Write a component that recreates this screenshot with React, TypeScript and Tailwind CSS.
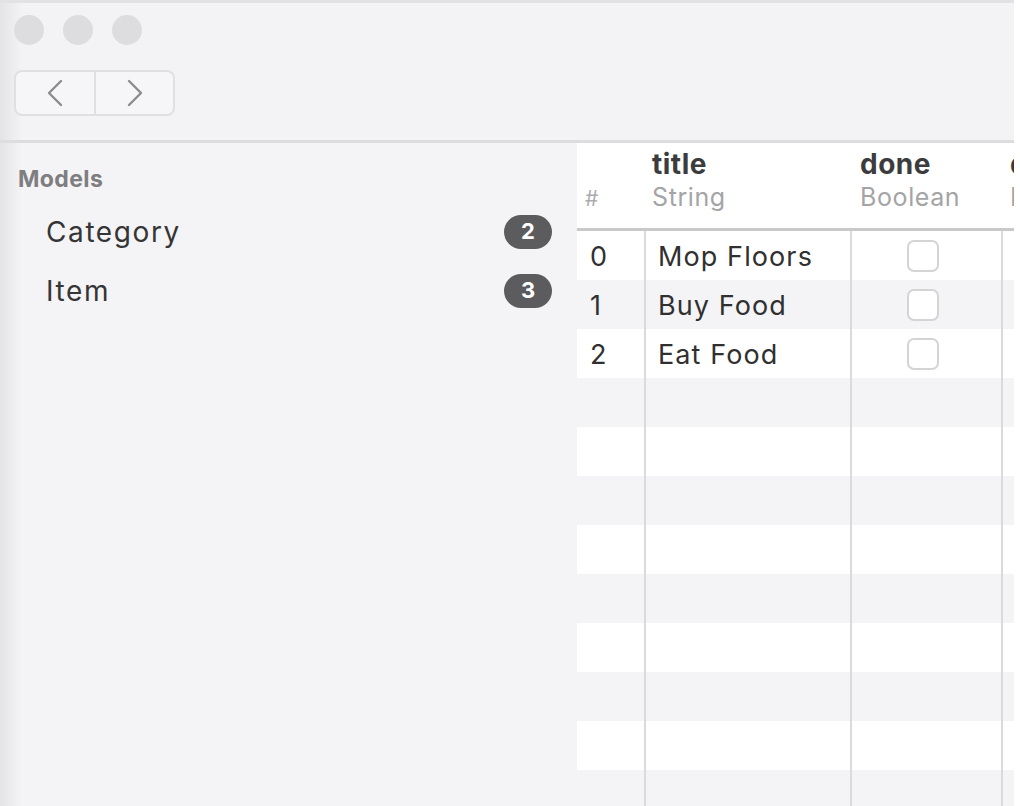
type Row = { id: number; title: string; done: boolean };

const rows: Row[] = [
  { id: 0, title: "Mop Floors", done: false },
  { id: 1, title: "Buy Food", done: false },
  { id: 2, title: "Eat Food", done: false },
];

const models = [
  { name: "Category", count: 2 },
  { name: "Item", count: 3 },
];

const font = { fontFamily: "Inter, 'Liberation Sans', sans-serif" };

function Checkbox() {
  return <div className="w-[32px] h-[32px] rounded-[7px] border-2 border-[#d4d4d6] bg-white" />;
}

function Chevron({ dir }: { dir: "left" | "right" }) {
  return (
    <svg width="18" height="30" viewBox="0 0 18 30" fill="none" stroke="#8c8c8e" strokeWidth="2.4" strokeLinecap="round" strokeLinejoin="round">
      {dir === "left" ? <polyline points="15,3 3,15 15,27" /> : <polyline points="3,3 15,15 3,27" />}
    </svg>
  );
}

export default function App() {
  // 12 rows fill the visible height; only the first three hold data
  const filler = Array.from({ length: 12 }, (_, i) => i);

  return (
    <div className="w-[1020px] h-[806px] bg-white overflow-hidden flex" style={font}>
      <div className="w-[1014px] flex flex-col">
        {/* toolbar */}
        <div className="h-[140px] shrink-0 border-t-[3px] border-[#e2e2e4] bg-[linear-gradient(to_right,#e4e3e6,#f3f2f5_22px)] px-[14px] pt-[12px]">
          <div className="flex gap-[19px]">
            <div className="w-[30px] h-[30px] rounded-full bg-[#dddcdf]" />
            <div className="w-[30px] h-[30px] rounded-full bg-[#dddcdf]" />
            <div className="w-[30px] h-[30px] rounded-full bg-[#dddcdf]" />
          </div>
          <div className="mt-[25px] flex w-[161px] h-[46px] rounded-[8px] border-2 border-[#e0dfe2] bg-[#f6f5f8]">
            <div className="w-[80px] flex items-center justify-center border-r-2 border-[#e0dfe2]">
              <Chevron dir="left" />
            </div>
            <div className="flex-1 flex items-center justify-center">
              <Chevron dir="right" />
            </div>
          </div>
        </div>
        <div className="h-[3px] shrink-0 bg-[#dddcdf]" />

        <div className="flex flex-1 min-h-0">
          {/* sidebar */}
          <div className="w-[577px] shrink-0 bg-[linear-gradient(to_right,#e4e3e6,#f4f3f6_22px)] pt-[22px]">
            <div className="pl-[18px] text-[23px] font-bold text-[#7e7e80] leading-[28px] tracking-[0.4px]">Models</div>
            <div className="mt-[9px]">
              {models.map((m) => (
                <div key={m.name} className="h-[59px] flex items-center pl-[46px] pr-[25px]">
                  <span className="flex-1 text-[28px] text-[#353535] tracking-[1.6px]">{m.name}</span>
                  <span className="w-[48px] h-[34px] rounded-full bg-[#5c5c5e] text-white text-[22px] font-bold flex items-center justify-center">
                    {m.count}
                  </span>
                </div>
              ))}
            </div>
          </div>

          {/* table */}
          <div className="flex-1 min-w-0 flex flex-col overflow-hidden">
            <div className="h-[88px] shrink-0 flex bg-white border-b-[3px] border-[#c9c9cb]">
              <div className="w-[70px] shrink-0 pl-[8px] pt-[40px] text-[21px] text-[#ababad]">#</div>
              <div className="w-[206px] shrink-0 pl-[5px] pt-[4px]">
                <div className="text-[28px] font-bold text-[#3c3c3e] leading-[34px] tracking-[0.5px]">title</div>
                <div className="text-[25px] text-[#a4a4a6] leading-[32px] tracking-[0.6px]">String</div>
              </div>
              <div className="w-[151px] shrink-0 pl-[7px] pt-[4px]">
                <div className="text-[28px] font-bold text-[#3c3c3e] leading-[34px] tracking-[0.5px]">done</div>
                <div className="text-[25px] text-[#a4a4a6] leading-[32px] tracking-[0.6px]">Boolean</div>
              </div>
              <div className="flex-1 pl-[6px] pt-[4px] overflow-hidden whitespace-nowrap">
                <div className="text-[28px] font-bold text-[#3c3c3e] leading-[34px]">d</div>
                <div className="text-[25px] text-[#a4a4a6] leading-[32px]">D</div>
              </div>
            </div>
            {filler.map((i) => {
              const r = rows[i];
              return (
                <div key={i} className={`h-[49px] shrink-0 flex ${i % 2 === 1 ? "bg-[#f4f3f6]" : "bg-white"}`}>
                  <div className="w-[69px] shrink-0 pl-[13px] pt-[4px] flex items-center text-[27px] text-[#303030] border-r-2 border-[#dadadc]">
                    {r ? r.id : ""}
                  </div>
                  <div className="w-[206px] shrink-0 pl-[12px] pt-[4px] flex items-center text-[27px] text-[#303030] border-r-2 border-[#dadadc] tracking-[1.1px]">
                    {r ? r.title : ""}
                  </div>
                  <div className="w-[151px] shrink-0 flex items-center justify-center pr-[8px] border-r-2 border-[#dadadc]">
                    {r && <Checkbox />}
                  </div>
                  <div className="flex-1" />
                </div>
              );
            })}
          </div>
        </div>
      </div>
    </div>
  );
}
